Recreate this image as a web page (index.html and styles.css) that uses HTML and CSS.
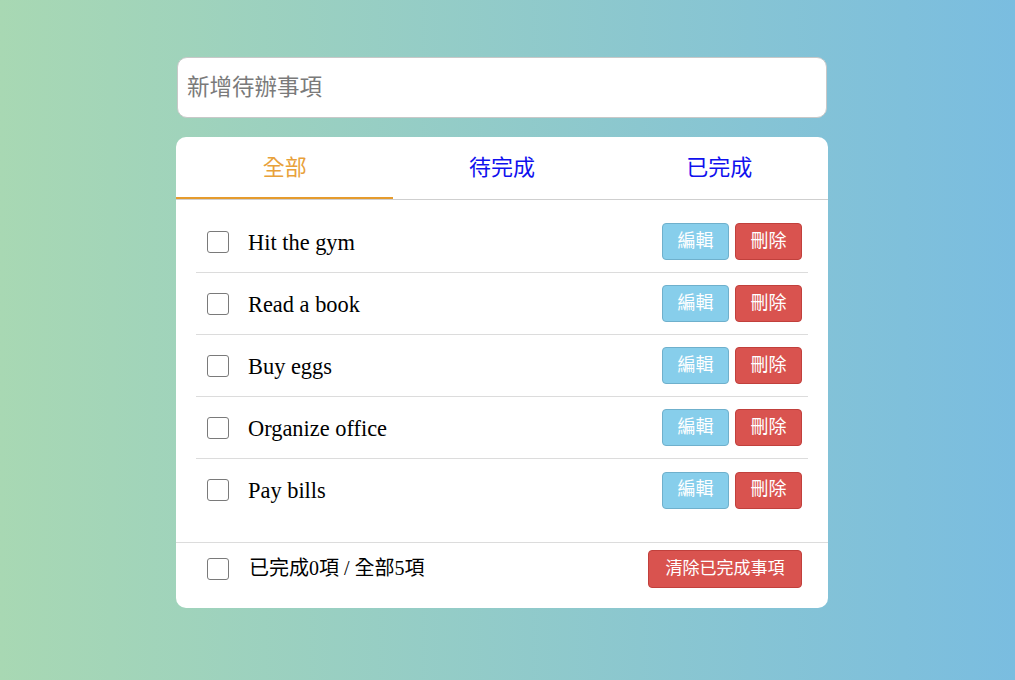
FILE: index.html
```html
<!DOCTYPE html>
<html lang="zh-Hant">
<head>
<meta charset="utf-8">
<title>Todo</title>
<link rel="stylesheet" href="styles.css">
</head>
<body>
<div class="app">
  <input class="new-todo" type="text" placeholder="新增待辦事項">
  <div class="card">
    <div class="tabs">
      <div class="tab active">全部</div>
      <div class="tab">待完成</div>
      <div class="tab">已完成</div>
    </div>
    <ul class="list">
      <li class="item"><input type="checkbox" class="check"><span class="text">Hit the gym</span><button class="btn edit">編輯</button><button class="btn del">刪除</button></li>
      <li class="item"><input type="checkbox" class="check"><span class="text">Read a book</span><button class="btn edit">編輯</button><button class="btn del">刪除</button></li>
      <li class="item"><input type="checkbox" class="check"><span class="text">Buy eggs</span><button class="btn edit">編輯</button><button class="btn del">刪除</button></li>
      <li class="item"><input type="checkbox" class="check"><span class="text">Organize office</span><button class="btn edit">編輯</button><button class="btn del">刪除</button></li>
      <li class="item"><input type="checkbox" class="check"><span class="text">Pay bills</span><button class="btn edit">編輯</button><button class="btn del">刪除</button></li>
    </ul>
    <div class="footer">
      <input type="checkbox" class="check">
      <span class="count">已完成0項 / 全部5項</span>
      <button class="btn del clear">清除已完成事項</button>
    </div>
  </div>
</div>
</body>
</html>
```
FILE: styles.css
```css
html, body {
  margin: 0;
  height: 100%;
}
body {
  background: linear-gradient(to right, #a8d8b3, #7abde0);
  padding: 57px 11px 0 0;
  box-sizing: border-box;
  font-family: "Liberation Serif", "Noto Sans CJK TC", serif;
}
.app {
  width: 652px;
  margin: 0 auto;
}
.new-todo {
  display: block;
  box-sizing: border-box;
  width: 650px;
  height: 61px;
  margin: 0 1px 19px;
  padding: 0 9px 6px;
  border: 1px solid #c8c8c8;
  border-radius: 10px;
  font-family: "Noto Sans CJK TC", sans-serif;
  font-size: 22.5px;
  color: #333;
  outline: none;
}
.new-todo::placeholder {
  color: #7a7a7a;
}
.card {
  background: #fff;
  border-radius: 10px;
  overflow: hidden;
}
.tabs {
  display: flex;
  border-bottom: 1px solid #cfcfcf;
}
.tab {
  flex: 1;
  height: 60px;
  line-height: 56px;
  text-align: center;
  font-family: "Noto Sans CJK TC", sans-serif;
  font-size: 22px;
  color: #1010ee;
  border-bottom: 2px solid transparent;
}
.tab.active {
  color: #e8a13a;
  border-bottom-color: #e59b2d;
}
.list {
  list-style: none;
  margin: 0;
  padding: 11px 20px 21px;
}
.item {
  display: flex;
  align-items: center;
  height: 61px;
  padding: 0 6px 0 11px;
  border-bottom: 1px solid #dcdcdc;
}
.item:last-child {
  border-bottom: none;
  height: 62px;
}
.check {
  appearance: none;
  -webkit-appearance: none;
  width: 22px;
  height: 22px;
  margin: 0;
  box-sizing: border-box;
  border: 1.5px solid #7a7a7a;
  border-radius: 3px;
  background: #fff;
  flex: none;
}
.text {
  flex: 1;
  margin-left: 19px;
  padding-top: 2px;
  font-size: 22.4px;
  color: #000;
}
.btn {
  box-sizing: border-box;
  height: 37px;
  width: 67px;
  border-radius: 4px;
  border: 1px solid;
  color: #fff;
  font-family: "Noto Sans CJK TC", sans-serif;
  font-size: 18px;
  line-height: 1;
  padding: 0 0 6px;
  cursor: pointer;
}
.edit {
  background: #87ceeb;
  border-color: #6fb0cc;
}
.del {
  background: #d9534f;
  border-color: #c1403c;
  margin-left: 6px;
}
.footer {
  display: flex;
  align-items: center;
  border-top: 1px solid #dcdcdc;
  padding: 7px 26px 20px 31px;
}
.count {
  flex: 1;
  margin-left: 20px;
  padding-bottom: 5px;
  font-size: 20px;
  color: #000;
}
.btn.clear {
  width: 154px;
  height: 38px;
  margin-left: 0;
  font-size: 17px;
  padding-bottom: 5px;
}
```
